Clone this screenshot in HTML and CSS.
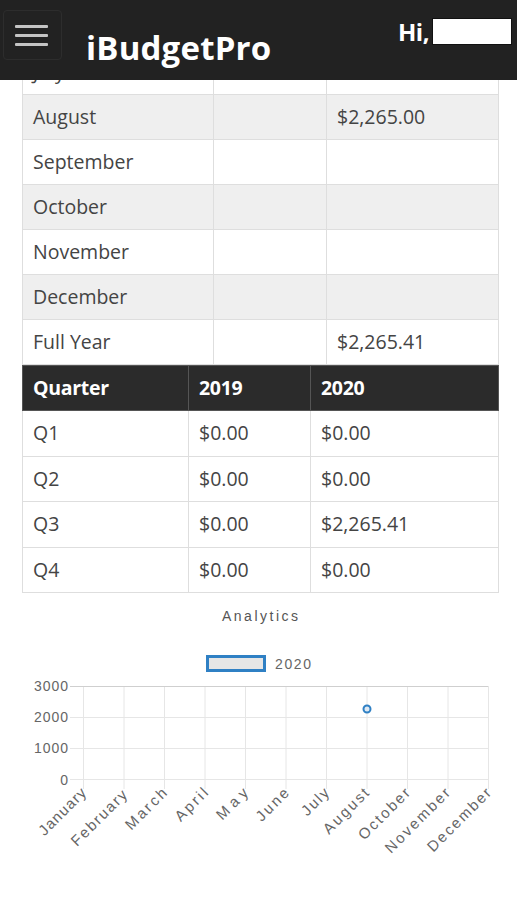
FILE: index.html
```html
<!DOCTYPE html>
<html lang="en">
<head>
<meta charset="utf-8">
<title>iBudgetPro</title>
<link rel="stylesheet" href="styles.css">
</head>
<body>
<header class="topbar">
  <button class="menu-btn" aria-label="Menu">
    <span class="bar"></span><span class="bar"></span><span class="bar"></span>
  </button>
  <div class="brand">iBudgetPro</div>
  <div class="greet"><span class="hi">Hi,</span><span class="name-box"></span></div>
</header>

<main class="content">
  <table class="grid months">
    <colgroup><col class="m1"><col class="m2"><col class="m3"></colgroup>
    <tbody>
      <tr><td>July</td><td></td><td></td></tr>
      <tr class="alt"><td>August</td><td></td><td>$2,265.00</td></tr>
      <tr><td>September</td><td></td><td></td></tr>
      <tr class="alt"><td>October</td><td></td><td></td></tr>
      <tr><td>November</td><td></td><td></td></tr>
      <tr class="alt"><td>December</td><td></td><td></td></tr>
      <tr><td>Full Year</td><td></td><td>$2,265.41</td></tr>
    </tbody>
  </table>

  <table class="grid quarters">
    <colgroup><col class="q1"><col class="q2"><col class="q3"></colgroup>
    <thead>
      <tr><th>Quarter</th><th>2019</th><th>2020</th></tr>
    </thead>
    <tbody>
      <tr><td>Q1</td><td>$0.00</td><td>$0.00</td></tr>
      <tr><td>Q2</td><td>$0.00</td><td>$0.00</td></tr>
      <tr><td>Q3</td><td>$0.00</td><td>$2,265.41</td></tr>
      <tr><td>Q4</td><td>$0.00</td><td>$0.00</td></tr>
    </tbody>
  </table>

  <svg class="chart" width="517" height="300" viewBox="0 0 517 300">
    <text class="c-title" x="222" y="22" textLength="76" lengthAdjust="spacing">Analytics</text>
    <rect x="207.5" y="57.5" width="57" height="14" fill="#e6e6e6" stroke="#2f80c4" stroke-width="3"/>
    <text class="c-text" x="275" y="70" textLength="36" lengthAdjust="spacing">2020</text>

    <g stroke="#e6e6e6" stroke-width="1">
      <line x1="70" y1="118.5" x2="488" y2="118.5"/>
      <line x1="70" y1="149.5" x2="488" y2="149.5"/>
      <line x1="70" y1="180.5" x2="488" y2="180.5"/>
      <line x1="83.5" y1="87" x2="83.5" y2="190"/>
      <line x1="124" y1="87" x2="124" y2="190"/>
      <line x1="164.5" y1="87" x2="164.5" y2="190"/>
      <line x1="205" y1="87" x2="205" y2="190"/>
      <line x1="245.5" y1="87" x2="245.5" y2="190"/>
      <line x1="286" y1="87" x2="286" y2="190"/>
      <line x1="326.5" y1="87" x2="326.5" y2="190"/>
      <line x1="367" y1="87" x2="367" y2="190"/>
      <line x1="407.5" y1="87" x2="407.5" y2="190"/>
      <line x1="448" y1="87" x2="448" y2="190"/>
      <line x1="488.5" y1="87" x2="488.5" y2="190"/>
    </g>
    <line x1="70" y1="87.5" x2="488" y2="87.5" stroke="#cfcfcf" stroke-width="1"/>

    <g class="c-text" text-anchor="end">
      <text x="68" y="92" textLength="34" lengthAdjust="spacing">3000</text>
      <text x="68" y="123" textLength="34" lengthAdjust="spacing">2000</text>
      <text x="68" y="154" textLength="34" lengthAdjust="spacing">1000</text>
      <text x="68" y="186">0</text>
    </g>

    <circle cx="367" cy="110" r="3.5" fill="#dfe9f3" stroke="#2f80c4" stroke-width="2"/>

    <g class="c-text x-labels" text-anchor="end">
      <text transform="translate(87 195) rotate(-45)" textLength="60" lengthAdjust="spacing">January</text>
      <text transform="translate(128 197) rotate(-45)" textLength="72" lengthAdjust="spacing">February</text>
      <text transform="translate(168 195) rotate(-45)" textLength="52" lengthAdjust="spacing">March</text>
      <text transform="translate(209 195) rotate(-45)" textLength="40" lengthAdjust="spacing">April</text>
      <text transform="translate(249 195) rotate(-45)" textLength="38" lengthAdjust="spacing">May</text>
      <text transform="translate(290 195) rotate(-45)" textLength="40" lengthAdjust="spacing">June</text>
      <text transform="translate(330 195) rotate(-45)" textLength="32" lengthAdjust="spacing">July</text>
      <text transform="translate(370 195) rotate(-45)" textLength="58" lengthAdjust="spacing">August</text>
      <text transform="translate(411 195) rotate(-45)" textLength="66" lengthAdjust="spacing">October</text>
      <text transform="translate(451 195) rotate(-45)" textLength="85" lengthAdjust="spacing">November</text>
      <text transform="translate(492 195) rotate(-45)" textLength="83" lengthAdjust="spacing">December</text>
    </g>
  </svg>
</main>
</body>
</html>
```

FILE: styles.css
```css
html, body {
  margin: 0;
  padding: 0;
  background: #ffffff;
  font-family: "Open Sans", "Liberation Sans", Arial, sans-serif;
}

.topbar {
  position: fixed;
  top: 0;
  left: 0;
  right: 0;
  height: 80px;
  background: #222222;
  z-index: 10;
  display: flex;
  align-items: flex-start;
  box-sizing: border-box;
}

.menu-btn {
  margin: 10px 0 0 3px;
  width: 59px;
  height: 50px;
  background: transparent;
  border: 1px solid #2d2d2d;
  border-radius: 4px;
  display: flex;
  flex-direction: column;
  justify-content: center;
  align-items: flex-start;
  gap: 6px;
  padding: 0 0 0 11px;
  box-sizing: border-box;
}

.menu-btn .bar {
  display: block;
  width: 33px;
  height: 3px;
  background: #c4c4c4;
  border-radius: 1px;
}

.brand {
  margin: 22px 0 0 24px;
  color: #ffffff;
  font-weight: 700;
  font-size: 33px;
  line-height: 52px;
  letter-spacing: 0.2px;
}

.greet {
  margin: 18px 5px 0 auto;
  display: flex;
  align-items: center;
  gap: 3px;
}

.hi {
  color: #ffffff;
  font-weight: 700;
  font-size: 24px;
  line-height: 27px;
  letter-spacing: -0.5px;
}

.name-box {
  width: 78px;
  height: 25px;
  background: #ffffff;
  border: 1px solid #111;
  box-sizing: content-box;
}

.content {
  padding-top: 49px;
}

.grid {
  border-collapse: collapse;
  margin-left: 22px;
  width: 476px;
  table-layout: fixed;
  font-size: 19.5px;
  color: #444444;
}

.grid td, .grid th {
  border: 1px solid #dedede;
  height: 45px;
  padding: 0 10px;
  text-align: left;
  vertical-align: middle;
  box-sizing: border-box;
  white-space: nowrap;
  line-height: 24px;
}

.grid tr.alt td {
  background: #efefef;
}

.months .m1 { width: 191px; }
.months .m2 { width: 113px; }
.months .m3 { width: 172px; }

.quarters .q1 { width: 166px; }
.quarters .q2 { width: 122px; }
.quarters .q3 { width: 188px; }

.quarters th {
  background: #2b2b2b;
  color: #ffffff;
  font-weight: 700;
  border-color: #555;
  letter-spacing: -0.3px;
}

.quarters td {
  height: 45.5px;
}

.chart {
  display: block;
  margin-top: 6px;
}

.c-title {
  font-family: "Liberation Sans", Arial, sans-serif;
  font-size: 14px;
  fill: #555;
}

.c-text {
  font-family: "Liberation Sans", Arial, sans-serif;
  font-size: 14px;
  fill: #666;
}

.x-labels {
  font-size: 15px;
}
```
